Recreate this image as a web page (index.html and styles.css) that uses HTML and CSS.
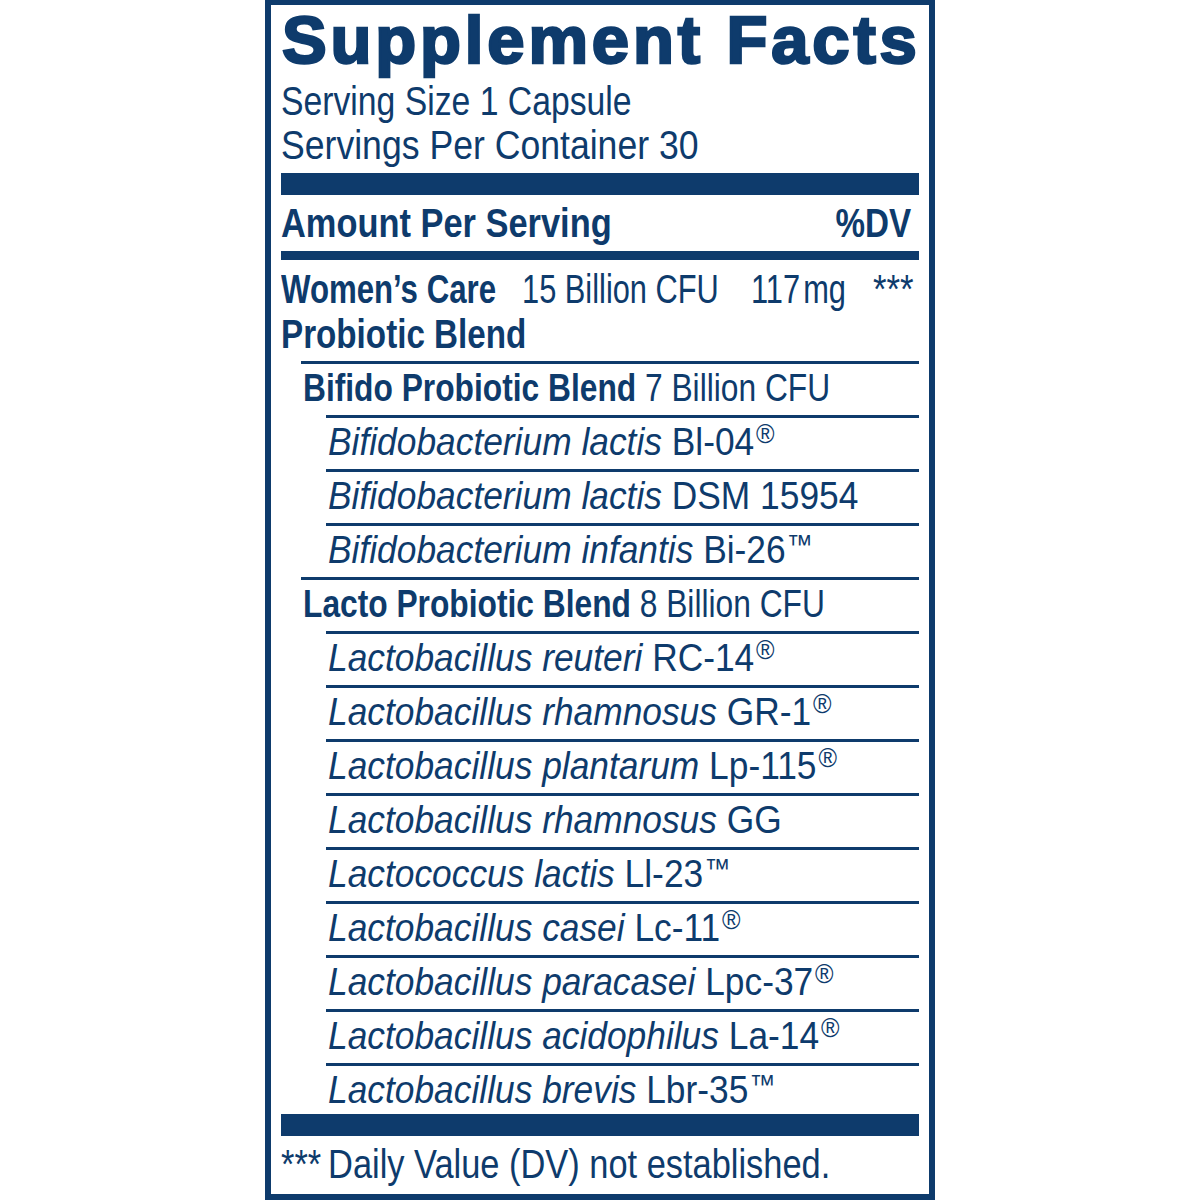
FILE: index.html
```html
<!DOCTYPE html>
<html lang="en">
<head>
<meta charset="utf-8">
<title>Supplement Facts</title>
<link rel="stylesheet" href="styles.css">
</head>
<body>
<div class="label">
  <h1 class="title">Supplement Facts</h1>
  <div class="serving">
    <div><span class="cx s1">Serving Size 1 Capsule</span></div>
    <div><span class="cx s2">Servings Per Container 30</span></div>
  </div>
  <div class="bar bar-thick"></div>
  <div class="amount-head">
    <span class="cx cb amt">Amount Per Serving</span>
    <span class="cx cb right">%DV</span>
  </div>
  <div class="bar bar-mid"></div>
  <div class="blend">
    <div class="blend-row">
      <span class="cx cb wc">Women’s Care</span>
      <span class="cx cn">15 Billion CFU</span>
      <span class="cx cn">117<span class="mg">mg</span></span>
      <span class="cx stars">***</span>
    </div>
    <div><span class="cx cb">Probiotic Blend</span></div>
  </div>
  <div class="row sub"><span class="cx cs"><b>Bifido Probiotic Blend</b> 7 Billion CFU</span></div>
  <div class="row item"><span class="cx ci"><i>Bifidobacterium lactis</i> Bl-04<sup>®</sup></span></div>
  <div class="row item"><span class="cx ci"><i>Bifidobacterium lactis</i> DSM 15954</span></div>
  <div class="row item"><span class="cx ci"><i>Bifidobacterium infantis</i> Bi-26<sup class="tm">™</sup></span></div>
  <div class="row sub"><span class="cx cs"><b>Lacto Probiotic Blend</b> 8 Billion CFU</span></div>
  <div class="row item"><span class="cx ci"><i>Lactobacillus reuteri</i> RC-14<sup>®</sup></span></div>
  <div class="row item"><span class="cx ci"><i>Lactobacillus rhamnosus</i> GR-1<sup>®</sup></span></div>
  <div class="row item"><span class="cx ci"><i>Lactobacillus plantarum</i> Lp-115<sup>®</sup></span></div>
  <div class="row item"><span class="cx ci"><i>Lactobacillus rhamnosus</i> GG</span></div>
  <div class="row item"><span class="cx ci"><i>Lactococcus lactis</i> Ll-23<sup class="tm">™</sup></span></div>
  <div class="row item"><span class="cx ci"><i>Lactobacillus casei</i> Lc-11<sup>®</sup></span></div>
  <div class="row item"><span class="cx ci"><i>Lactobacillus paracasei</i> Lpc-37<sup>®</sup></span></div>
  <div class="row item"><span class="cx ci"><i>Lactobacillus acidophilus</i> La-14<sup>®</sup></span></div>
  <div class="row item"><span class="cx ci"><i>Lactobacillus brevis</i> Lbr-35<sup class="tm">™</sup></span></div>
  <div class="bar bar-thick bar-bottom"></div>
  <div class="foot"><span class="cx"><span class="fstars">***</span>Daily Value (DV) not established.</span></div>
</div>
</body>
</html>
```

FILE: styles.css
```css
html, body {
  margin: 0;
  padding: 0;
  background: #ffffff;
}

.label {
  box-sizing: border-box;
  margin-left: 265px;
  width: 670px;
  height: 1200px;
  border: 6px solid #0e3b6c;
  border-top-width: 5px;
  padding: 0 10px 0 10px;
  color: #0e3b6c;
  font-family: "Liberation Sans", Arial, sans-serif;
  font-size: 40px;
  overflow: hidden;
}

/* horizontally condensed text (Helvetica Condensed look) */
.cx {
  display: inline-block;
  white-space: nowrap;
  transform-origin: 0 50%;
  transform: scaleX(var(--sx, 0.86));
}

.s1 {
  --sx: 0.843;
}

.s2 {
  --sx: 0.89;
}

.cb {
  font-weight: bold;
  --sx: 0.83;
}

.amt {
  --sx: 0.86;
}

.wc {
  --sx: 0.78;
}

.cn {
  --sx: 0.77;
}

.mg {
  margin-left: 4px;
}

.cs {
  --sx: 0.835;
}

.ci {
  --sx: 0.93;
}

.right {
  transform-origin: 100% 50%;
  margin-right: 8px;
}

.title {
  margin: 0;
  font-family: "Liberation Sans", Arial, sans-serif;
  font-weight: 900;
  font-size: 67px;
  line-height: 70px;
  letter-spacing: 3.85px;
  -webkit-text-stroke: 2.5px #0e3b6c;
  white-space: nowrap;
  padding-left: 1px;
}

.serving {
  margin-top: 4px;
  line-height: 44px;
}

.bar {
  background: #0e3b6c;
}

.bar-thick {
  height: 22px;
  margin-top: 6px;
}

.amount-head {
  display: flex;
  justify-content: space-between;
  line-height: 44px;
  margin-top: 6px;
}

.bar-mid {
  height: 9px;
  margin-top: 6px;
}

.blend {
  margin-top: 7px;
  margin-bottom: 4px;
  line-height: 45px;
}

.blend-row {
  display: grid;
  grid-template-columns: 241px 229px 122px auto;
}

.stars {
  --sx: 0.87;
}

.row {
  border-top: 3px solid #0e3b6c;
  font-size: 38px;
  line-height: 49px;
  padding-bottom: 2px;
}

.sub {
  margin-left: 20px;
  padding-left: 2px;
}

.item {
  margin-left: 45px;
  padding-left: 2px;
}

sup {
  font-size: 27px;
  line-height: 0;
  vertical-align: 12px;
  margin-left: 2px;
}

sup.tm {
  font-size: 28px;
  vertical-align: 9px;
  margin-left: 1px;
}

.bar-bottom {
  margin-top: -3px;
}

.foot {
  margin-top: 6px;
  line-height: 44px;
}

.fstars {
  margin-right: 8px;
}
```
